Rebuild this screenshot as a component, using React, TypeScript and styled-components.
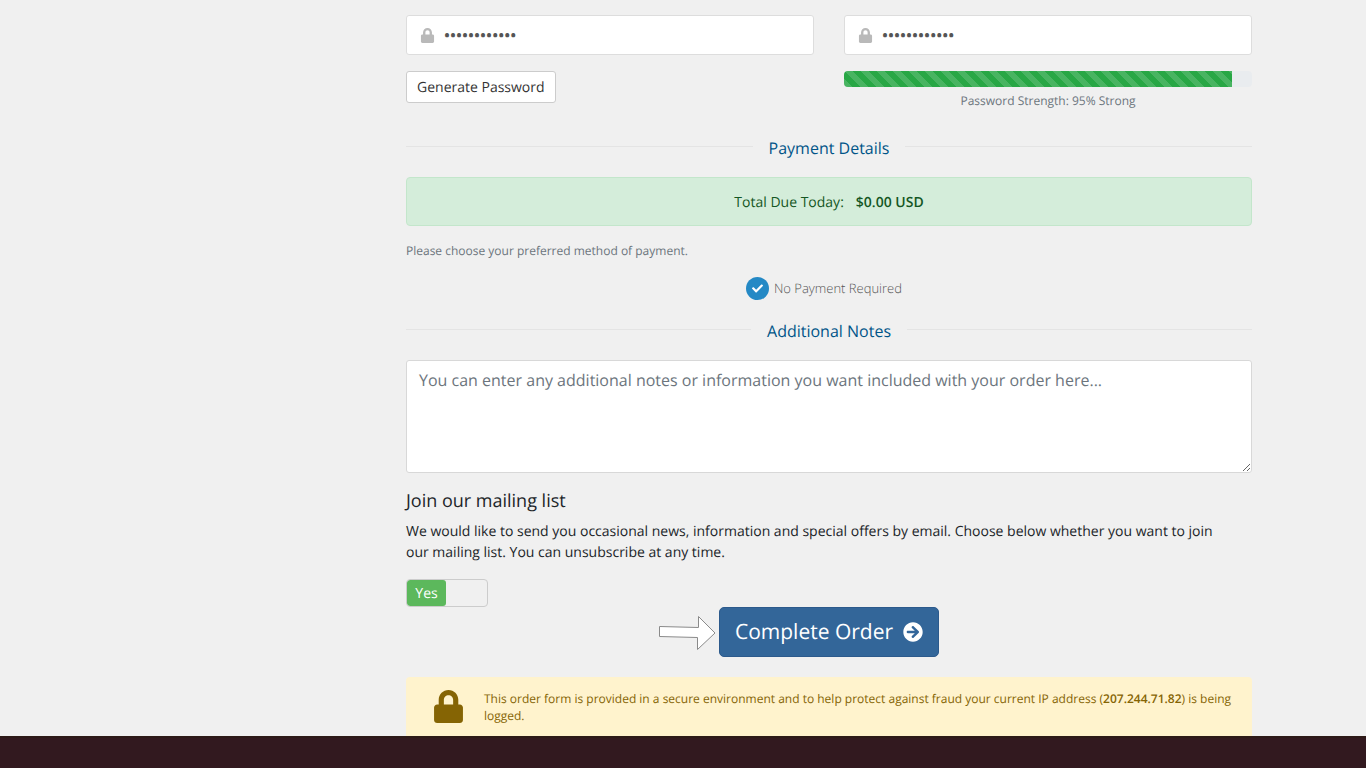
import React, { useState } from "react";
import styled, { createGlobalStyle } from "styled-components";
import { FaArrowCircleRight, FaCheck, FaLock } from "react-icons/fa";

const GlobalStyle = createGlobalStyle`
  *, *::before, *::after { box-sizing: border-box; }
  body {
    margin: 0;
    background: #f0f0f0;
    color: #212529;
    font-family: "Open Sans", "Noto Sans", sans-serif;
    font-size: 14px;
    line-height: 21px;
    text-rendering: geometricPrecision;
  }
  button, input, textarea { font-family: inherit; text-rendering: inherit; }
  strong { font-weight: 600; }
`;

const Page = styled.div`
  display: flex;
  flex-direction: column;
  min-height: 100vh;
`;

const Checkout = styled.form`
  flex: 1;
  display: flex;
  flex-direction: column;
  padding: 15px 114px 0 406px;
`;

const PasswordGrid = styled.div`
  display: grid;
  grid-template-columns: 1fr 1fr;
  gap: 16px 30px;
  align-items: start;
`;

const Field = styled.label`
  display: flex;
  align-items: center;
  gap: 9px;
  height: 40px;
  padding: 0 13px;
  background: #fff;
  border: 1px solid #dddddd;
  border-radius: 3px;
  color: #b9b9b9;
`;

const PasswordInput = styled.input`
  flex: 1;
  min-width: 0;
  padding: 0;
  border: 0;
  outline: 0;
  background: transparent;
  color: #555;
  font-size: 16px;
  font-weight: 600;
`;

const GenerateButton = styled.button`
  justify-self: start;
  height: 32px;
  padding: 1px 10px 0;
  background: #fff;
  border: 1px solid #ccc;
  border-radius: 3px;
  color: #333;
  font-size: 14px;
  line-height: 29px;
`;

const Strength = styled.div`
  color: #6c757d;
  font-size: 12px;
  line-height: 18px;
  text-align: center;
`;

const Track = styled.div`
  height: 16px;
  margin-bottom: 5px;
  background: #e9ecef;
  border-radius: 4px;
  overflow: hidden;
`;

const Bar = styled.div`
  height: 100%;
  background-color: #28a745;
  background-image: linear-gradient(
    45deg,
    rgba(255, 255, 255, 0.15) 25%,
    transparent 25%,
    transparent 50%,
    rgba(255, 255, 255, 0.15) 50%,
    rgba(255, 255, 255, 0.15) 75%,
    transparent 75%,
    transparent
  );
  background-size: 16px 16px;
`;

const SectionTitle = styled.h2`
  display: flex;
  align-items: center;
  gap: 16px;
  margin: 0;
  color: #058;
  font-size: 16px;
  font-weight: 400;
  line-height: 24px;

  &::before,
  &::after {
    content: "";
    flex: 1;
    height: 1px;
    margin-bottom: 3px;
    background: #e4e4e4;
  }
`;

const PaymentTitle = styled(SectionTitle)`
  margin-top: 26px;
`;

const TotalDue = styled.div`
  display: flex;
  justify-content: center;
  gap: 12px;
  margin: 17px 0 16px;
  padding: 14px 20px 12px;
  background: #d4edda;
  border: 1px solid #c3e6cb;
  border-radius: 4px;
  color: #155724;
`;

const Hint = styled.p`
  margin: 0;
  color: #6c757d;
  font-size: 12px;
  line-height: 18px;
`;

const PaymentChoice = styled.label`
  display: flex;
  align-items: center;
  align-self: center;
  gap: 5px;
  margin: 17px 0 19px;
  padding-right: 10px;
  color: #555;
  font-size: 13px;
  font-weight: 300;
`;

const RadioMark = styled.span`
  display: grid;
  place-items: center;
  color: #fff;

  > * { grid-area: 1 / 1; }
`;

const Radio = styled.input`
  appearance: none;
  width: 23px;
  height: 23px;
  margin: 0;
  border-radius: 50%;
  background: #2489c5;
`;

const Notes = styled.textarea`
  display: block;
  width: 100%;
  height: 113px;
  margin: 17px 0 16px;
  padding: 6px 12px;
  border: 1px solid #d8d8d8;
  border-radius: 3px;
  background: #fff;
  font-size: 16px;
  line-height: 26px;
  resize: vertical;

  &::placeholder { color: #6c757d; }
`;

const MailingTitle = styled.h3`
  margin: 0 0 8px;
  font-size: 18px;
  font-weight: 400;
  line-height: 24px;
`;

const MailingText = styled.p`
  margin: 0 0 16px;
  padding-right: 16px;
`;

const Toggle = styled.label`
  display: flex;
  align-self: flex-start;
  width: 82px;
  height: 28px;
  border: 1px solid #ccc;
  border-radius: 4px;
  overflow: hidden;
`;

const ToggleInput = styled.input`
  position: absolute;
  opacity: 0;
  margin: 0;
`;

const ToggleFace = styled.span<{ $on: boolean }>`
  width: 39px;
  margin-left: ${(p) => (p.$on ? "0" : "auto")};
  border-radius: 3px;
  background: ${(p) => (p.$on ? "#5cb85c" : "#fff")};
  color: ${(p) => (p.$on ? "#fff" : "#333")};
  line-height: 27px;
  text-align: center;
`;

const SubmitArea = styled.div`
  position: relative;
  align-self: center;
  margin-bottom: 20px;
`;

const Pointer = styled.svg`
  position: absolute;
  right: 100%;
  top: 8px;
  margin-right: 3px;
`;

const SubmitButton = styled.button`
  display: flex;
  align-items: center;
  gap: 10px;
  height: 50px;
  padding: 0 15px;
  border: 1px solid #2c5a8c;
  border-radius: 5px;
  background: #336699;
  color: #fff;
  font-size: 21px;
`;

const SecureNotice = styled.aside`
  display: flex;
  gap: 19px;
  padding: 13px 8px 12px 26px;
  background: #fff3cd;
  border-radius: 4px 4px 0 0;
  color: #856404;
  font-size: 12px;
  line-height: 17px;

  svg { flex: none; }
  p { margin: 0; }
`;

const Footer = styled.footer`
  height: 32px;
  background: #32191f;
  border-top: 2px solid #2d1a17;
`;

export default function App() {
  const [password, setPassword] = useState("abcdefghijkl");
  const [confirm, setConfirm] = useState("abcdefghijkl");
  const [subscribed, setSubscribed] = useState(true);
  const strength = 95;

  return (
    <Page>
      <GlobalStyle />
      <Checkout onSubmit={(e) => e.preventDefault()}>
        <PasswordGrid>
          <Field>
            <FaLock size={15} />
            <PasswordInput
              type="password"
              aria-label="Password"
              value={password}
              onChange={(e) => setPassword(e.target.value)}
            />
          </Field>
          <Field>
            <FaLock size={15} />
            <PasswordInput
              type="password"
              aria-label="Confirm Password"
              value={confirm}
              onChange={(e) => setConfirm(e.target.value)}
            />
          </Field>
          <GenerateButton type="button">Generate Password</GenerateButton>
          <Strength>
            <Track>
              <Bar style={{ width: `${strength}%` }} />
            </Track>
            Password Strength: {strength}% Strong
          </Strength>
        </PasswordGrid>

        <PaymentTitle>Payment Details</PaymentTitle>
        <TotalDue>
          <span>Total Due Today:</span>
          <strong>$0.00 USD</strong>
        </TotalDue>
        <Hint>Please choose your preferred method of payment.</Hint>
        <PaymentChoice>
          <RadioMark>
            <Radio type="radio" name="payment" defaultChecked />
            <FaCheck size={11} />
          </RadioMark>
          No Payment Required
        </PaymentChoice>

        <SectionTitle>Additional Notes</SectionTitle>
        <Notes
          aria-label="Additional Notes"
          placeholder="You can enter any additional notes or information you want included with your order here..."
        />

        <MailingTitle>Join our mailing list</MailingTitle>
        <MailingText>
          We would like to send you occasional news, information and special offers by email. Choose
          below whether you want to join our mailing list. You can unsubscribe at any time.
        </MailingText>
        <Toggle>
          <ToggleInput
            type="checkbox"
            aria-label="Join our mailing list"
            checked={subscribed}
            onChange={(e) => setSubscribed(e.target.checked)}
          />
          <ToggleFace $on={subscribed}>{subscribed ? "Yes" : "No"}</ToggleFace>
        </Toggle>

        <SubmitArea>
          <Pointer width="58" height="36" viewBox="0 0 58 36" aria-hidden="true">
            <path
              d="M1.5 11.5 L40.5 12.5 L40.5 1.5 L57 18 L39.5 34.5 L39.5 22.5 L1.5 21.5 Z"
              fill="#fff"
              stroke="#8a8a8a"
              strokeWidth="1"
            />
          </Pointer>
          <SubmitButton type="submit">
            Complete Order
            <FaArrowCircleRight size={20} />
          </SubmitButton>
        </SubmitArea>

        <SecureNotice>
          <FaLock size={33} />
          <p>
            This order form is provided in a secure environment and to help protect against fraud
            your current IP address (<strong>207.244.71.82</strong>) is being logged.
          </p>
        </SecureNotice>
      </Checkout>
      <Footer />
    </Page>
  );
}
